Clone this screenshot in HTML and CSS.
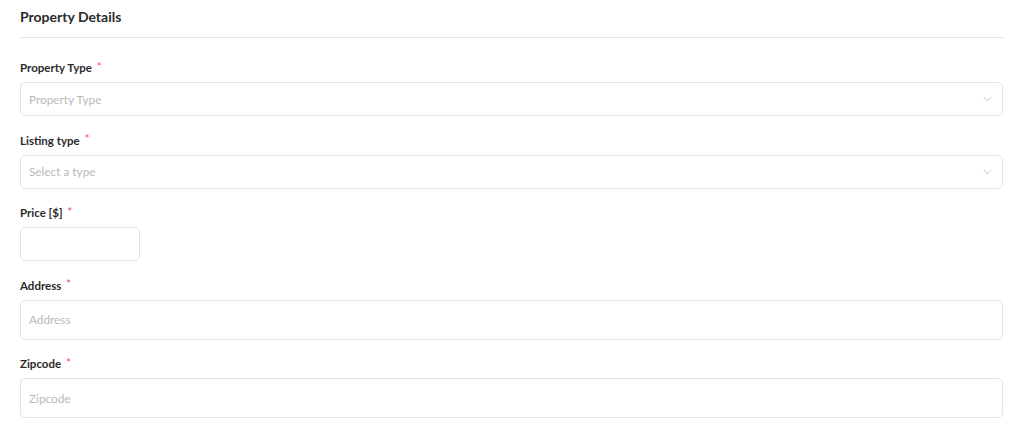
FILE: index.html
```html
<!DOCTYPE html>
<html lang="en">
<head>
<meta charset="utf-8">
<title>Property Details</title>
<link rel="stylesheet" href="styles.css">
</head>
<body>
<section class="panel">
  <h2 class="panel-title">Property Details</h2>
  <form class="form">
    <div class="field">
      <label class="label">Property Type<span class="req">*</span></label>
      <div class="control select">
        <span class="placeholder">Property Type</span>
        <svg class="chev" width="9" height="6" viewBox="0 0 9 6"><path d="M0.8 0.8 L4.5 4.8 L8.2 0.8" fill="none" stroke="#c4c4c4" stroke-width="1"/></svg>
      </div>
    </div>
    <div class="field">
      <label class="label">Listing type<span class="req">*</span></label>
      <div class="control select">
        <span class="placeholder">Select a type</span>
        <svg class="chev" width="9" height="6" viewBox="0 0 9 6"><path d="M0.8 0.8 L4.5 4.8 L8.2 0.8" fill="none" stroke="#c4c4c4" stroke-width="1"/></svg>
      </div>
    </div>
    <div class="field">
      <label class="label">Price [$]<span class="req">*</span></label>
      <div class="control price"></div>
    </div>
    <div class="field">
      <label class="label">Address<span class="req">*</span></label>
      <div class="control text"><span class="placeholder">Address</span></div>
    </div>
    <div class="field">
      <label class="label">Zipcode<span class="req">*</span></label>
      <div class="control text"><span class="placeholder">Zipcode</span></div>
    </div>
  </form>
</section>
</body>
</html>
```
FILE: styles.css
```css
* { box-sizing: border-box; }
html, body { margin: 0; background: #fff; }
body { font-family: Lato, "Open Sans", sans-serif; color: #2f2f2f; }
.panel { padding: 0 21px 0 20px; }
.panel-title {
  margin: 0;
  font-size: 14px;
  font-weight: 700;
  line-height: 18px;
  padding-top: 8px;
  padding-bottom: 11px;
  border-bottom: 1px solid #e3e3e3;
  color: #2b2b2b;
}
.form { display: flex; flex-direction: column; gap: 16.5px; padding-top: 22px; }
.field { display: flex; flex-direction: column; gap: 6px; }
.label { font-size: 11.5px; font-weight: 700; line-height: 16px; color: #2b2b2b; }
.req { color: #ee4b4b; font-size: 11px; margin-left: 5px; position: relative; top: -1.5px; font-weight: 400; }
.control {
  display: flex;
  align-items: center;
  border-radius: 5px;
  padding: 0 8px 0 8px;
  font-size: 11.8px;
}
.select { height: 34px; border: 1px solid #e3e1f4; justify-content: space-between; padding-right: 10px; }
.price { height: 34px; width: 120px; border: 1px solid #e3e1f4; }
.text { height: 40px; border: 1px solid #e2e2e6; }
.placeholder { color: #b9b9b9; }
.chev { display: block; }
```
